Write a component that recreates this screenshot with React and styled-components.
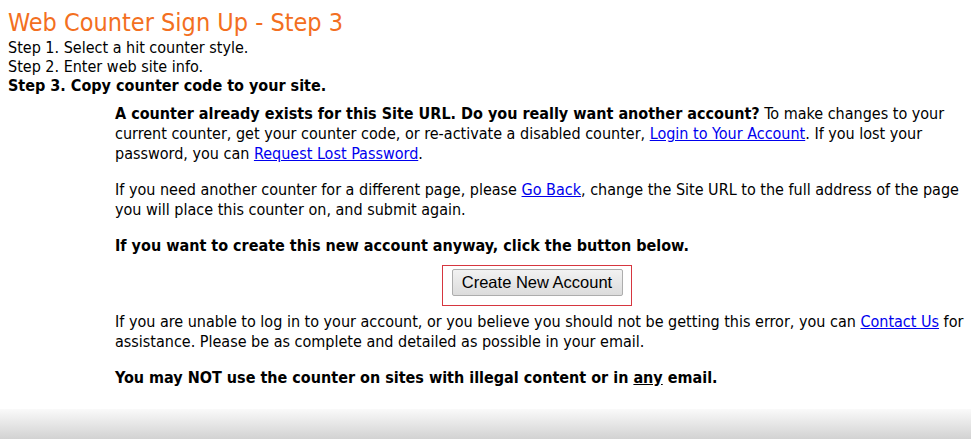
import React from 'react';
import styled, { createGlobalStyle } from 'styled-components';

const Global = createGlobalStyle`
  html, body { height: 100%; }
  body {
    margin: 0;
    background: #fff;
    font-family: Tahoma, "DejaVu Sans Condensed", "DejaVu Sans", sans-serif;
    font-size: 16px;
    color: #000;
  }
`;

const Page = styled.div`
  min-height: 439px;
  display: flex;
  flex-direction: column;
`;

const Main = styled.div`
  padding: 8px 8px 0 8px;
  flex: 1;
`;

const Title = styled.h1`
  margin: 0;
  font-size: 25px;
  font-weight: normal;
  color: #f36f21;
  line-height: 30px;
`;

const Steps = styled.div`
  line-height: 19px;
`;

const Step = styled.div`
  font-weight: ${({ current }) => (current ? 'bold' : 'normal')};
`;

const Content = styled.div`
  margin: 9px 0 0 107px;
  width: 850px;
  line-height: 20px;
`;

const P = styled.p`
  margin: 0 0 16px;
`;

const Link = styled.a`
  color: #0000ee;
  text-decoration: underline;
  cursor: pointer;
`;

const ButtonRow = styled.div`
  display: flex;
  justify-content: center;
  margin: -7px 0 6px;
  padding-right: 7px;
`;

const ButtonFrame = styled.div`
  display: flex;
  border: 1px solid #d6363f;
  padding: 3px 8px 9px 9px;
`;

const Button = styled.button`
  font-family: Arial, "Liberation Sans", sans-serif;
  font-size: 16.5px;
  color: #000;
  width: 171px;
  height: 27px;
  padding: 0;
  border: 1px solid #adadad;
  border-radius: 2px;
  background: linear-gradient(#f2f2f2, #dcdcdc);
`;

const Footer = styled.div`
  height: 30px;
  background: linear-gradient(#fafafa, #d2d2d2);
`;

export default function App() {
  return (
    <Page>
      <Global />
      <Main>
        <Title>Web Counter Sign Up - Step 3</Title>
        <Steps>
          <Step>Step 1. Select a hit counter style.</Step>
          <Step>Step 2. Enter web site info.</Step>
          <Step current>Step 3. Copy counter code to your site.</Step>
        </Steps>
        <Content>
          <P>
            <b>A counter already exists for this Site URL. Do you really want another account?</b> To make
            changes to your current counter, get your counter code, or re-activate a disabled counter,{' '}
            <Link>Login to Your Account</Link>. If you lost your password, you can{' '}
            <Link>Request Lost Password</Link>.
          </P>
          <P>
            If you need another counter for a different page, please <Link>Go Back</Link>, change the Site
            URL to the full address of the page you will place this counter on, and submit again.
          </P>
          <P>
            <b>If you want to create this new account anyway, click the button below.</b>
          </P>
          <ButtonRow>
            <ButtonFrame>
              <Button>Create New Account</Button>
            </ButtonFrame>
          </ButtonRow>
          <P>
            If you are unable to log in to your account, or you believe you should not be getting this error,
            you can <Link>Contact Us</Link> for assistance. Please be as complete and detailed as possible in
            your email.
          </P>
          <P>
            <b>
              You may NOT use the counter on sites with illegal content or in <u>any</u> email.
            </b>
          </P>
        </Content>
      </Main>
      <Footer />
    </Page>
  );
}
